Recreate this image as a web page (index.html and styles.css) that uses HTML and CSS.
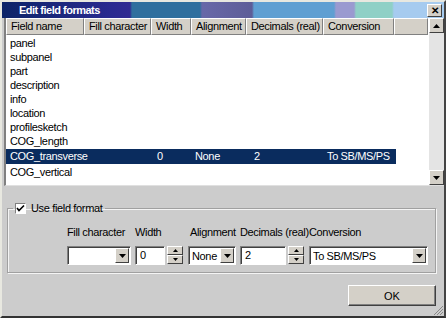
FILE: index.html
```html
<!DOCTYPE html>
<html lang="en">
<head>
  <meta charset="UTF-8">
  <title>Edit field formats</title>
  <link rel="stylesheet" href="styles.css">
</head>
<body>
  <div class="window">
    <div class="titlebar">
      <span class="title">Edit field formats</span>
      <span class="close-btn">&#x2715;</span>
    </div>

    <div class="listbox">
      <div class="list-main">
        <div class="list-head">
          <div class="hcell c-name">Field name</div>
          <div class="hcell c-fill">Fill character</div>
          <div class="hcell c-width">Width</div>
          <div class="hcell c-align">Alignment</div>
          <div class="hcell c-dec">Decimals (real)</div>
          <div class="hcell c-conv">Conversion</div>
          <div class="hcell c-extra"></div>
        </div>
        <div class="list-rows">
          <div class="row"><div class="cell c-name">panel</div></div>
          <div class="row"><div class="cell c-name">subpanel</div></div>
          <div class="row"><div class="cell c-name">part</div></div>
          <div class="row"><div class="cell c-name">description</div></div>
          <div class="row"><div class="cell c-name">info</div></div>
          <div class="row"><div class="cell c-name">location</div></div>
          <div class="row"><div class="cell c-name">profilesketch</div></div>
          <div class="row"><div class="cell c-name">COG_length</div></div>
          <div class="row selected">
            <div class="cell c-name">COG_transverse</div>
            <div class="cell c-fill"></div>
            <div class="cell c-width">0</div>
            <div class="cell c-align">None</div>
            <div class="cell c-dec">2</div>
            <div class="cell c-conv">To SB/MS/PS</div>
          </div>
          <div class="row"><div class="cell c-name">COG_vertical</div></div>
        </div>
      </div>
      <div class="vscroll">
        <div class="sbtn"><svg width="7" height="4" viewBox="0 0 7 4"><path d="M3.5 0 L7 4 L0 4 Z" fill="#000"/></svg></div>
        <div class="strack"></div>
        <div class="sbtn"><svg width="7" height="4" viewBox="0 0 7 4"><path d="M0 0 L7 0 L3.5 4 Z" fill="#000"/></svg></div>
      </div>
    </div>

    <fieldset class="group">
      <legend class="group-legend">
        <span class="checkbox"><svg width="9" height="9" viewBox="0 0 9 9"><path d="M1 4 L3 6.5 L8 1.5" stroke="#000" stroke-width="1.6" fill="none"/></svg></span>
        Use field format
      </legend>
      <div class="fields">
        <div class="field f-fill">
          <label>Fill character</label>
          <div class="combo"><span class="combo-text"></span><span class="drop"><svg width="7" height="4" viewBox="0 0 7 4"><path d="M0 0 L7 0 L3.5 4 Z" fill="#000"/></svg></span></div>
        </div>
        <div class="field f-width">
          <label>Width</label>
          <div class="spinbox">
            <div class="edit">0</div>
            <div class="spin">
              <span class="spin-btn"><svg width="5" height="3" viewBox="0 0 5 3"><path d="M2.5 0 L5 3 L0 3 Z" fill="#000"/></svg></span>
              <span class="spin-btn"><svg width="5" height="3" viewBox="0 0 5 3"><path d="M0 0 L5 0 L2.5 3 Z" fill="#000"/></svg></span>
            </div>
          </div>
        </div>
        <div class="field f-align">
          <label>Alignment</label>
          <div class="combo"><span class="combo-text">None</span><span class="drop"><svg width="7" height="4" viewBox="0 0 7 4"><path d="M0 0 L7 0 L3.5 4 Z" fill="#000"/></svg></span></div>
        </div>
        <div class="field f-dec">
          <label>Decimals (real)</label>
          <div class="spinbox">
            <div class="edit">2</div>
            <div class="spin">
              <span class="spin-btn"><svg width="5" height="3" viewBox="0 0 5 3"><path d="M2.5 0 L5 3 L0 3 Z" fill="#000"/></svg></span>
              <span class="spin-btn"><svg width="5" height="3" viewBox="0 0 5 3"><path d="M0 0 L5 0 L2.5 3 Z" fill="#000"/></svg></span>
            </div>
          </div>
        </div>
        <div class="field f-conv">
          <label>Conversion</label>
          <div class="combo"><span class="combo-text">To SB/MS/PS</span><span class="drop"><svg width="7" height="4" viewBox="0 0 7 4"><path d="M0 0 L7 0 L3.5 4 Z" fill="#000"/></svg></span></div>
        </div>
      </div>
    </fieldset>

    <div class="buttons">
      <button class="ok-btn">OK</button>
    </div>
    <div class="grip"><svg width="11" height="11" viewBox="0 0 11 11"><path d="M10 1 L1 10 M10 4 L4 10 M10 7 L7 10" stroke="#888" stroke-width="1"/></svg></div>
  </div>
</body>
</html>
```

FILE: styles.css
```css
* {
  box-sizing: border-box;
}
body {
  margin: 0;
  background: #cccccc;
  font-family: "Liberation Sans", Arial, sans-serif;
  font-size: 11px;
  letter-spacing: -0.35px;
  color: #000;
}
.window {
  position: relative;
  width: 446px;
  height: 318px;
  background: #cccccc;
  border-left: 2px solid #e8e8e0;
  border-top: 2px solid #e8e8e0;
  border-right: 2px solid #444;
  border-bottom: 2px solid #333;
  display: flex;
  flex-direction: column;
}
.titlebar {
  height: 16px;
  display: flex;
  align-items: center;
  padding: 0 2px 0 0;
  background: linear-gradient(to right,
    #0c2468 0px, #2a2a90 110px,
    #302a92 128px, #2f6f9e 130px, #2f6f9e 198px,
    #6868a8 200px, #5d5d98 250px,
    #5f9fd2 252px, #5f9fd2 332px,
    #9a9ad0 334px, #9a9ad0 352px,
    #8fd0c6 354px, #8fd0c6 390px,
    #a6cbef 392px, #a6cbef 442px);
}
.title {
  flex: 1;
  padding-left: 17px;
  color: #fff;
  font-weight: bold;
  font-size: 11px;
  letter-spacing: -0.5px;
}
.close-btn {
  width: 15px;
  height: 13px;
  background: #d4d0c8;
  border-top: 1px solid #fff;
  border-left: 1px solid #fff;
  border-right: 1px solid #404040;
  border-bottom: 1px solid #404040;
  font-size: 10px;
  font-weight: bold;
  line-height: 11px;
  text-align: center;
}
.listbox {
  margin: 0 0 0 2px;
  height: 168px;
  display: flex;
  background: #fff;
  border-left: 2px solid #808080;
  border-bottom: 1px solid #e0e0e0;
}
.list-main {
  flex: 1;
  display: flex;
  flex-direction: column;
}
.list-head {
  display: flex;
  height: 17px;
}
.hcell {
  background: #d4d0c8;
  border-top: 1px solid #fff;
  border-left: 1px solid #fff;
  border-right: 1px solid #808080;
  border-bottom: 1px solid #808080;
  padding: 1px 0 0 4px;
  white-space: nowrap;
  overflow: hidden;
}
.c-name { width: 78px; }
.c-fill { width: 67px; }
.c-width { width: 40px; }
.c-align { width: 55px; }
.c-dec { width: 77px; }
.c-conv { width: 71px; }
.c-extra { width: 34px; }
.list-rows {
  padding-top: 1px;
}
.row {
  display: flex;
  height: 14px;
  line-height: 14px;
}
.row .cell {
  padding-left: 4px;
  white-space: nowrap;
}
.row.selected {
  width: 390px;
  background: #0a2c5e;
  color: #fff;
  height: 15px;
  line-height: 15px;
  margin: 1px 0;
}
.row.selected .c-width { padding-left: 6px; }
.row.selected .c-dec { padding-left: 8px; }
.vscroll {
  width: 15px;
  display: flex;
  flex-direction: column;
  background: #e4e4e4;
}
.sbtn {
  height: 15px;
  background: #d4d0c8;
  border-top: 1px solid #fff;
  border-left: 1px solid #fff;
  border-right: 1px solid #404040;
  border-bottom: 1px solid #404040;
  display: flex;
  align-items: center;
  justify-content: center;
}
.strack {
  flex: 1;
}
.group {
  margin: 16px 8px 0 5px;
  height: 71px;
  border: 1px solid #a0a0a0;
  box-shadow: inset 1px 1px 0 #f4f4f4, 1px 1px 0 #f4f4f4;
  padding: 0;
}
.group-legend {
  margin-left: 5px;
  padding: 0 3px 0 2px;
  display: flex;
  align-items: center;
}
.checkbox {
  width: 11px;
  height: 11px;
  background: #fff;
  border-top: 1px solid #808080;
  border-left: 1px solid #808080;
  border-right: 1px solid #fff;
  border-bottom: 1px solid #fff;
  margin-right: 5px;
  display: flex;
  align-items: center;
  justify-content: center;
}
.fields {
  display: flex;
  margin: 12px 0 0 59px;
}
.field {
  display: flex;
  flex-direction: column;
  gap: 7px;
}
.field label {
  height: 13px;
  white-space: nowrap;
}
.f-fill { width: 64px; }
.f-width { width: 48px; margin-left: 4px; }
.f-align { width: 48px; margin-left: 5px; }
.f-dec { width: 64px; margin-left: 4px; }
.f-conv { width: 119px; margin-left: 5px; }
.f-align label { padding-left: 2px; }
.combo, .edit {
  height: 19px;
  background: #fff;
  border-top: 1px solid #808080;
  border-left: 1px solid #808080;
  border-right: 1px solid #fff;
  border-bottom: 1px solid #fff;
  box-shadow: inset 1px 1px 0 #404040;
}
.combo {
  display: flex;
  align-items: center;
  padding: 0 1px 0 3px;
}
.combo-text {
  flex: 1;
  white-space: nowrap;
  overflow: hidden;
}
.drop {
  width: 14px;
  height: 15px;
  background: #d4d0c8;
  border-top: 1px solid #fff;
  border-left: 1px solid #fff;
  border-right: 1px solid #404040;
  border-bottom: 1px solid #404040;
  display: flex;
  align-items: center;
  justify-content: center;
}
.spinbox {
  display: flex;
  gap: 2px;
}
.edit {
  flex: 1;
  padding: 2px 0 0 4px;
}
.spin {
  width: 16px;
  display: flex;
  flex-direction: column;
}
.spin-btn {
  height: 9px;
  background: #d4d0c8;
  border-top: 1px solid #fff;
  border-left: 1px solid #fff;
  border-right: 1px solid #404040;
  border-bottom: 1px solid #404040;
  display: flex;
  align-items: center;
  justify-content: center;
}
.buttons {
  display: flex;
  justify-content: flex-end;
  padding: 12px 8px 0 0;
}
.ok-btn {
  width: 88px;
  height: 21px;
  background: #d4d0c8;
  border-top: 1px solid #fff;
  border-left: 1px solid #fff;
  border-right: 1px solid #404040;
  border-bottom: 1px solid #404040;
  box-shadow: inset -1px -1px 0 #808080;
  font-family: inherit;
  font-size: 11px;
  padding: 0;
}
.grip {
  position: absolute;
  right: 0;
  bottom: 0;
  width: 11px;
  height: 11px;
}
```
